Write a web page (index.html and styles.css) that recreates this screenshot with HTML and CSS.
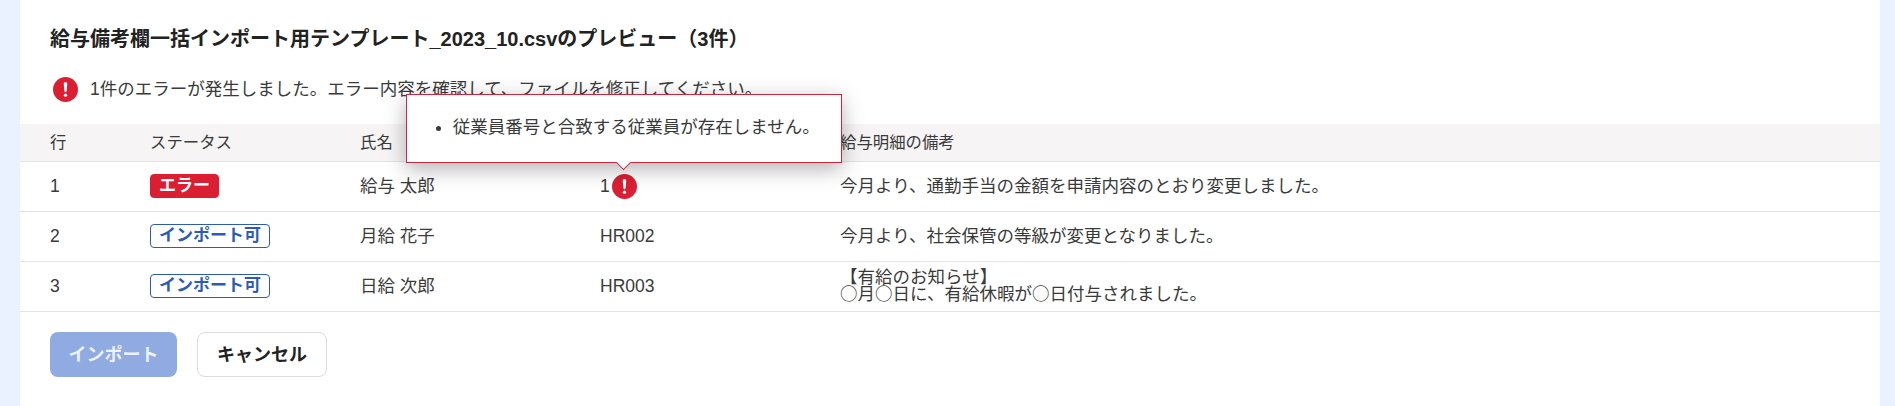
FILE: index.html
```html
<!DOCTYPE html>
<html lang="ja">
<head>
<meta charset="utf-8">
<title>プレビュー</title>
<link rel="stylesheet" href="styles.css">
</head>
<body>
<main class="card">
  <h1 class="title">給与備考欄一括インポート用テンプレート_2023_10.csvのプレビュー（3件）</h1>
  <p class="alert">
    <svg class="icon" viewBox="0 0 24 24" aria-hidden="true"><circle cx="12" cy="12" r="12" fill="#dc1e32"/><path d="M10.3 6.5a1.7 1.7 0 0 1 3.4 0l-.6 7a1.1 1.1 0 0 1-2.2 0z" fill="#fff"/><circle cx="12" cy="17.4" r="1.6" fill="#fff"/></svg>
    <span>1件のエラーが発生しました。エラー内容を確認して、ファイルを修正してください。</span>
  </p>
  <table class="grid">
    <colgroup><col class="c-row"><col class="c-status"><col class="c-name"><col class="c-id"><col></colgroup>
    <thead>
      <tr><th>行</th><th>ステータス</th><th>氏名</th><th>従業員番号</th><th>給与明細の備考</th></tr>
    </thead>
    <tbody>
      <tr>
        <td>1</td>
        <td><span class="badge badge-error">エラー</span></td>
        <td class="ja">給与 太郎</td>
        <td>
          <span class="id-cell">1<span class="err-wrap">
            <svg class="icon" viewBox="0 0 24 24" aria-hidden="true"><circle cx="12" cy="12" r="12" fill="#dc1e32"/><path d="M10.3 6.5a1.7 1.7 0 0 1 3.4 0l-.6 7a1.1 1.1 0 0 1-2.2 0z" fill="#fff"/><circle cx="12" cy="17.4" r="1.6" fill="#fff"/></svg>
            <span class="tooltip"><ul class="tip-list"><li>従業員番号と合致する従業員が存在しません。</li></ul></span>
          </span></span>
        </td>
        <td class="ja">今月より、通勤手当の金額を申請内容のとおり変更しました。</td>
      </tr>
      <tr>
        <td>2</td>
        <td><span class="badge badge-ok">インポート可</span></td>
        <td class="ja">月給 花子</td>
        <td>HR002</td>
        <td class="ja">今月より、社会保管の等級が変更となりました。</td>
      </tr>
      <tr>
        <td>3</td>
        <td><span class="badge badge-ok">インポート可</span></td>
        <td class="ja">日給 次郎</td>
        <td>HR003</td>
        <td class="ja tight">【有給のお知らせ】<br>○月○日に、有給休暇が○日付与されました。</td>
      </tr>
    </tbody>
  </table>
  <div class="actions">
    <button class="btn btn-primary" type="button" disabled>インポート</button>
    <button class="btn btn-secondary" type="button">キャンセル</button>
  </div>
</main>
</body>
</html>
```
FILE: styles.css
```css
html, body { margin: 0; height: 100%; }
body {
  background: #e9f2fe;
  padding: 0 15px 0 20px;
  font-family: "Liberation Sans", "Noto Sans CJK JP", sans-serif;
  color: #3a3a3a;
  font-size: 17.5px;
  overflow: hidden;
}
.card { background: #fff; height: 406px; box-sizing: border-box; padding-top: 27px; }
.title {
  margin: 0 30px;
  font-size: 20px;
  line-height: 24px;
  font-weight: 700;
  color: #222;
}
.alert {
  margin: 25px 30px 0 32.5px;
  display: flex;
  align-items: center;
  gap: 12.5px;
  height: 26px;
  line-height: 26px;
}
.icon { width: 25px; height: 25px; display: block; flex: none; }
.grid {
  margin-top: 22px;
  width: 100%;
  table-layout: fixed;
  border-collapse: collapse;
}
.c-row { width: 130px; }
.c-status { width: 210px; }
.c-name { width: 240px; }
.c-id { width: 240px; }
.grid th, .grid td {
  padding: 0 0 0 30px;
  text-align: left;
  border-bottom: 1px solid #e3e3e3;
  font-weight: 400;
}
.grid th:nth-child(n+2), .grid td:nth-child(n+2) { padding-left: 0; }
.grid thead tr { height: 37px; }
.grid th { background: #f6f4f5; font-size: 16.4px; line-height: 24px; }
.grid tbody tr { height: 50px; }
.grid td.ja { padding-bottom: 4px; }
.grid td.tight { line-height: 17px; font-family: "Noto Sans CJK JP", sans-serif; }
.badge {
  display: inline-block;
  box-sizing: border-box;
  height: 24px;
  line-height: 21px;
  border-radius: 4px;
  font-size: 17px;
  font-weight: 700;
  padding: 0 8px;
  vertical-align: middle;
  border: 1px solid;
}
.badge-error { background: #dc1e32; border-color: #dc1e32; color: #fff; }
.badge-ok { background: #fff; border-color: #2d5cb5; color: #2d5cb5; }
.id-cell { display: inline-flex; align-items: center; }
.err-wrap { position: relative; display: block; margin-left: 2px; }
.tooltip {
  position: absolute;
  left: -206px;
  bottom: 36px;
  box-sizing: border-box;
  display: block;
  width: 436px;
  height: 69px;
  background: #fff;
  border: 1px solid #c8283f;
  box-shadow: 0 6px 20px rgba(0, 0, 0, .3);
}
.tooltip::after {
  content: "";
  position: absolute;
  left: 211px;
  top: 100%;
  width: 10px;
  height: 10px;
  margin-top: -5px;
  background: #fff;
  border-right: 1px solid #c8283f;
  border-bottom: 1px solid #c8283f;
  transform: rotate(45deg);
}
.tip-list { margin: 0; padding: 0 0 0 46px; line-height: 64px; white-space: nowrap; }
.actions { display: flex; gap: 20px; padding: 20px 30px 0; }
.btn {
  height: 45px;
  border-radius: 8px;
  font: 700 18px "Liberation Sans", "Noto Sans CJK JP", sans-serif;
  box-sizing: border-box;
  padding: 0 0 3px;
}
.btn-primary { width: 127px; background: #8fabe2; color: #eef2fb; border: 0; }
.btn-secondary { width: 130px; background: #fff; color: #222; border: 1px solid #dcdcdc; }
```
